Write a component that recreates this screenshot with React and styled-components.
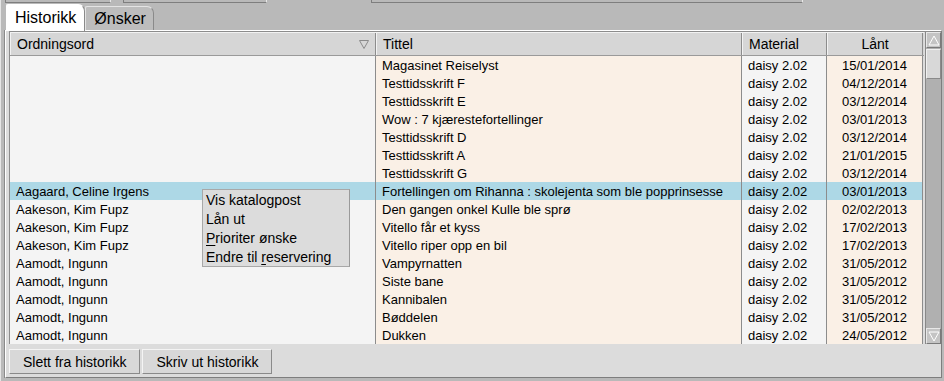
import React from 'react';
import styled, { createGlobalStyle } from 'styled-components';

const GlobalStyle = createGlobalStyle`
  html, body {
    margin: 0;
    padding: 0;
    background: #b9b9b9;
  }
  body {
    font-family: "Liberation Sans", Arial, sans-serif;
    font-size: 14px;
    color: #000;
  }
`;

const Window = styled.div`
  width: 944px;
  height: 381px;
  box-sizing: border-box;
  background: #b9b9b9;
  display: flex;
  flex-direction: column;
  padding: 0 2px 3px 4px;
  border-left: 1px solid #e6e6e6;
  overflow: hidden;
`;

const TopStrip = styled.div`
  height: 4px;
  display: flex;
  flex-shrink: 0;
`;

const StripSegment = styled.div`
  width: ${(p) => p.width}px;
  margin-left: ${(p) => p.gap || 0}px;
  height: 2px;
  border-bottom: 1px solid #7e7e7e;
  border-left: 1px solid #7e7e7e;
  border-right: 1px solid #e8e8e8;
`;

const TabBar = styled.div`
  height: 26px;
  display: flex;
  align-items: flex-end;
  padding-left: 1px;
  flex-shrink: 0;
`;

const Tab = styled.div`
  box-sizing: border-box;
  height: ${(p) => (p.$active ? 27 : 24)}px;
  margin-bottom: ${(p) => (p.$active ? -1 : 0)}px;
  padding: 0 ${(p) => (p.$active ? 8 : 7)}px 0 8px;
  font-size: 16px;
  display: flex;
  align-items: center;
  background: ${(p) => (p.$active ? '#ffffff' : '#bdbdbd')};
  border-left: 1px solid ${(p) => (p.$active ? '#ffffff' : '#e4e4e4')};
  border-top: 1px solid ${(p) => (p.$active ? '#ffffff' : '#e4e4e4')};
  border-right: 1px solid #8a8a8a;
  border-top-right-radius: 7px;
  border-top-left-radius: 2px;
  position: relative;
  z-index: ${(p) => (p.$active ? 2 : 1)};
`;

const Panel = styled.div`
  flex: 1;
  background: #dcdcdc;
  border-top: 1px solid #ffffff;
  border-left: 1px solid #ffffff;
  border-right: 1px solid #7e7e7e;
  border-bottom: 1px solid #7e7e7e;
  box-shadow: -1px 0 0 #8a8a8a;
  padding: 0 0 2px 3px;
  display: flex;
  flex-direction: column;
  min-height: 0;
`;

const TableFrame = styled.div`
  position: relative;
  display: flex;
  border-top: 1px solid #8c8c8c;
  border-left: 1px solid #8c8c8c;
  height: 313px;
  box-sizing: border-box;
  flex-shrink: 0;
`;

const TableArea = styled.div`
  width: 914px;
  display: flex;
  flex-direction: column;
`;

const GRID = '366px 366px 85px 96px';

const HeaderRow = styled.div`
  display: grid;
  grid-template-columns: ${GRID};
  height: 24px;
  flex-shrink: 0;
  background: #d6d6d6;
  border-top: 1px solid #f2f2f2;
  border-bottom: 1px solid #9a9a9a;
  box-sizing: border-box;
`;

const HeaderCell = styled.div`
  display: flex;
  align-items: center;
  justify-content: ${(p) => (p.$center ? 'center' : 'space-between')};
  padding: 0 6px;
  border-right: 1px solid #8c8c8c;
  border-left: 1px solid #f2f2f2;
  box-sizing: border-box;
  white-space: nowrap;
`;

const SortArrow = styled.svg`
  width: 10px;
  height: 9px;
`;

const Body = styled.div`
  flex: 1;
  display: flex;
  flex-direction: column;
`;

const Row = styled.div`
  display: grid;
  grid-template-columns: ${GRID};
  height: 18px;
  flex-shrink: 0;
`;

const Cell = styled.div`
  display: flex;
  align-items: center;
  justify-content: ${(p) => (p.$center ? 'center' : 'flex-start')};
  padding: 0 6px;
  font-size: 13px;
  background: ${(p) => (p.$selected ? '#add8e6' : p.$tint ? '#faf0e6' : '#f4f4f4')};
  border-right: 1px solid #8c8c8c;
  box-sizing: border-box;
  white-space: nowrap;
  overflow: hidden;
`;

const ScrollBar = styled.div`
  width: 16px;
  margin-left: 1px;
  background: #b0b0b0;
  border-left: 1px solid #888;
  display: flex;
  flex-direction: column;
  box-sizing: border-box;
`;

const ScrollButton = styled.div`
  height: 16px;
  flex-shrink: 0;
  background: #c4c4c4;
  border: 1px solid #e8e8e8;
  border-right-color: #7a7a7a;
  border-bottom-color: #7a7a7a;
  display: flex;
  align-items: center;
  justify-content: center;
  box-sizing: border-box;
`;

const ScrollThumb = styled.div`
  height: 30px;
  margin-top: 1px;
  background: #d8d8d8;
  border: 1px solid #f0f0f0;
  border-right-color: #8a8a8a;
  border-bottom-color: #8a8a8a;
  box-sizing: border-box;
`;

const ScrollTrack = styled.div`
  flex: 1;
`;

const ContextMenu = styled.div`
  position: absolute;
  left: 192px;
  top: 157px;
  width: 148px;
  box-sizing: border-box;
  background: #dcdcdc;
  border: 1px solid #a8a8a8;
  border-right-color: #9a9a9a;
  z-index: 5;
`;

const MenuItem = styled.div`
  height: 19px;
  display: flex;
  align-items: center;
  padding-left: 3px;
  white-space: nowrap;
`;

const Mnemonic = styled.span`
  text-decoration: underline;
  text-underline-offset: 2px;
`;

const ButtonRow = styled.div`
  display: flex;
  gap: 2px;
  margin-top: 5px;
`;

const Button = styled.button`
  font-family: inherit;
  font-size: 14px;
  height: 25px;
  padding: 0 13px;
  background: #d8d8d8;
  color: #000;
  border: 1px solid #f4f4f4;
  border-right-color: #8a8a8a;
  border-bottom-color: #8a8a8a;
  cursor: pointer;
`;

const rows = [
  ['', 'Magasinet Reiselyst', '15/01/2014'],
  ['', 'Testtidsskrift F', '04/12/2014'],
  ['', 'Testtidsskrift E', '03/12/2014'],
  ['', 'Wow : 7 kjærestefortellinger', '03/01/2013'],
  ['', 'Testtidsskrift D', '03/12/2014'],
  ['', 'Testtidsskrift A', '21/01/2015'],
  ['', 'Testtidsskrift G', '03/12/2014'],
  ['Aagaard, Celine Irgens', 'Fortellingen om Rihanna : skolejenta som ble popprinsesse', '03/01/2013'],
  ['Aakeson, Kim Fupz', 'Den gangen onkel Kulle ble sprø', '02/02/2013'],
  ['Aakeson, Kim Fupz', 'Vitello får et kyss', '17/02/2013'],
  ['Aakeson, Kim Fupz', 'Vitello riper opp en bil', '17/02/2013'],
  ['Aamodt, Ingunn', 'Vampyrnatten', '31/05/2012'],
  ['Aamodt, Ingunn', 'Siste bane', '31/05/2012'],
  ['Aamodt, Ingunn', 'Kannibalen', '31/05/2012'],
  ['Aamodt, Ingunn', 'Bøddelen', '31/05/2012'],
  ['Aamodt, Ingunn', 'Dukken', '24/05/2012'],
];

const SELECTED = 7;

function Arrow({ down }) {
  return (
    <svg width="12" height="11" viewBox="0 0 12 11">
      {down ? (
        <path d="M1 1 L11 1 L6 10 Z" fill="none" stroke="#ffffff" strokeWidth="1" />
      ) : (
        <path d="M1 10 L11 10 L6 1 Z" fill="none" stroke="#ffffff" strokeWidth="1" />
      )}
    </svg>
  );
}

export default function App() {
  return (
    <Window>
      <GlobalStyle />
      <TopStrip>
        <StripSegment width={104} />
        <StripSegment width={142} gap={12} />
        <StripSegment width={430} gap={104} />
      </TopStrip>
      <TabBar>
        <Tab $active>Historikk</Tab>
        <Tab>Ønsker</Tab>
      </TabBar>
      <Panel>
        <TableFrame>
          <TableArea>
            <HeaderRow>
              <HeaderCell>
                <span>Ordningsord</span>
                <SortArrow viewBox="0 0 10 9">
                  <path d="M0.5 0.5 L9.5 0.5 L5 8.5 Z" fill="none" stroke="#8a8a8a" strokeWidth="1" />
                </SortArrow>
              </HeaderCell>
              <HeaderCell>Tittel</HeaderCell>
              <HeaderCell>Material</HeaderCell>
              <HeaderCell $center>Lånt</HeaderCell>
            </HeaderRow>
            <Body>
              {rows.map(([author, title, date], i) => {
                const sel = i === SELECTED;
                return (
                  <Row key={i}>
                    <Cell $selected={sel}>{author}</Cell>
                    <Cell $tint $selected={sel}>{title}</Cell>
                    <Cell $selected={sel}>daisy 2.02</Cell>
                    <Cell $tint $center $selected={sel}>{date}</Cell>
                  </Row>
                );
              })}
            </Body>
          </TableArea>
          <ScrollBar>
            <ScrollButton>
              <Arrow />
            </ScrollButton>
            <ScrollThumb />
            <ScrollTrack />
            <ScrollButton>
              <Arrow down />
            </ScrollButton>
          </ScrollBar>
          <ContextMenu>
            <MenuItem>Vis katalogpost</MenuItem>
            <MenuItem>Lån ut</MenuItem>
            <MenuItem>
              <Mnemonic>P</Mnemonic>rioriter ønske
            </MenuItem>
            <MenuItem>
              Endre til&nbsp;<Mnemonic>r</Mnemonic>eservering
            </MenuItem>
          </ContextMenu>
        </TableFrame>
        <ButtonRow>
          <Button>Slett fra historikk</Button>
          <Button>Skriv ut historikk</Button>
        </ButtonRow>
      </Panel>
    </Window>
  );
}
